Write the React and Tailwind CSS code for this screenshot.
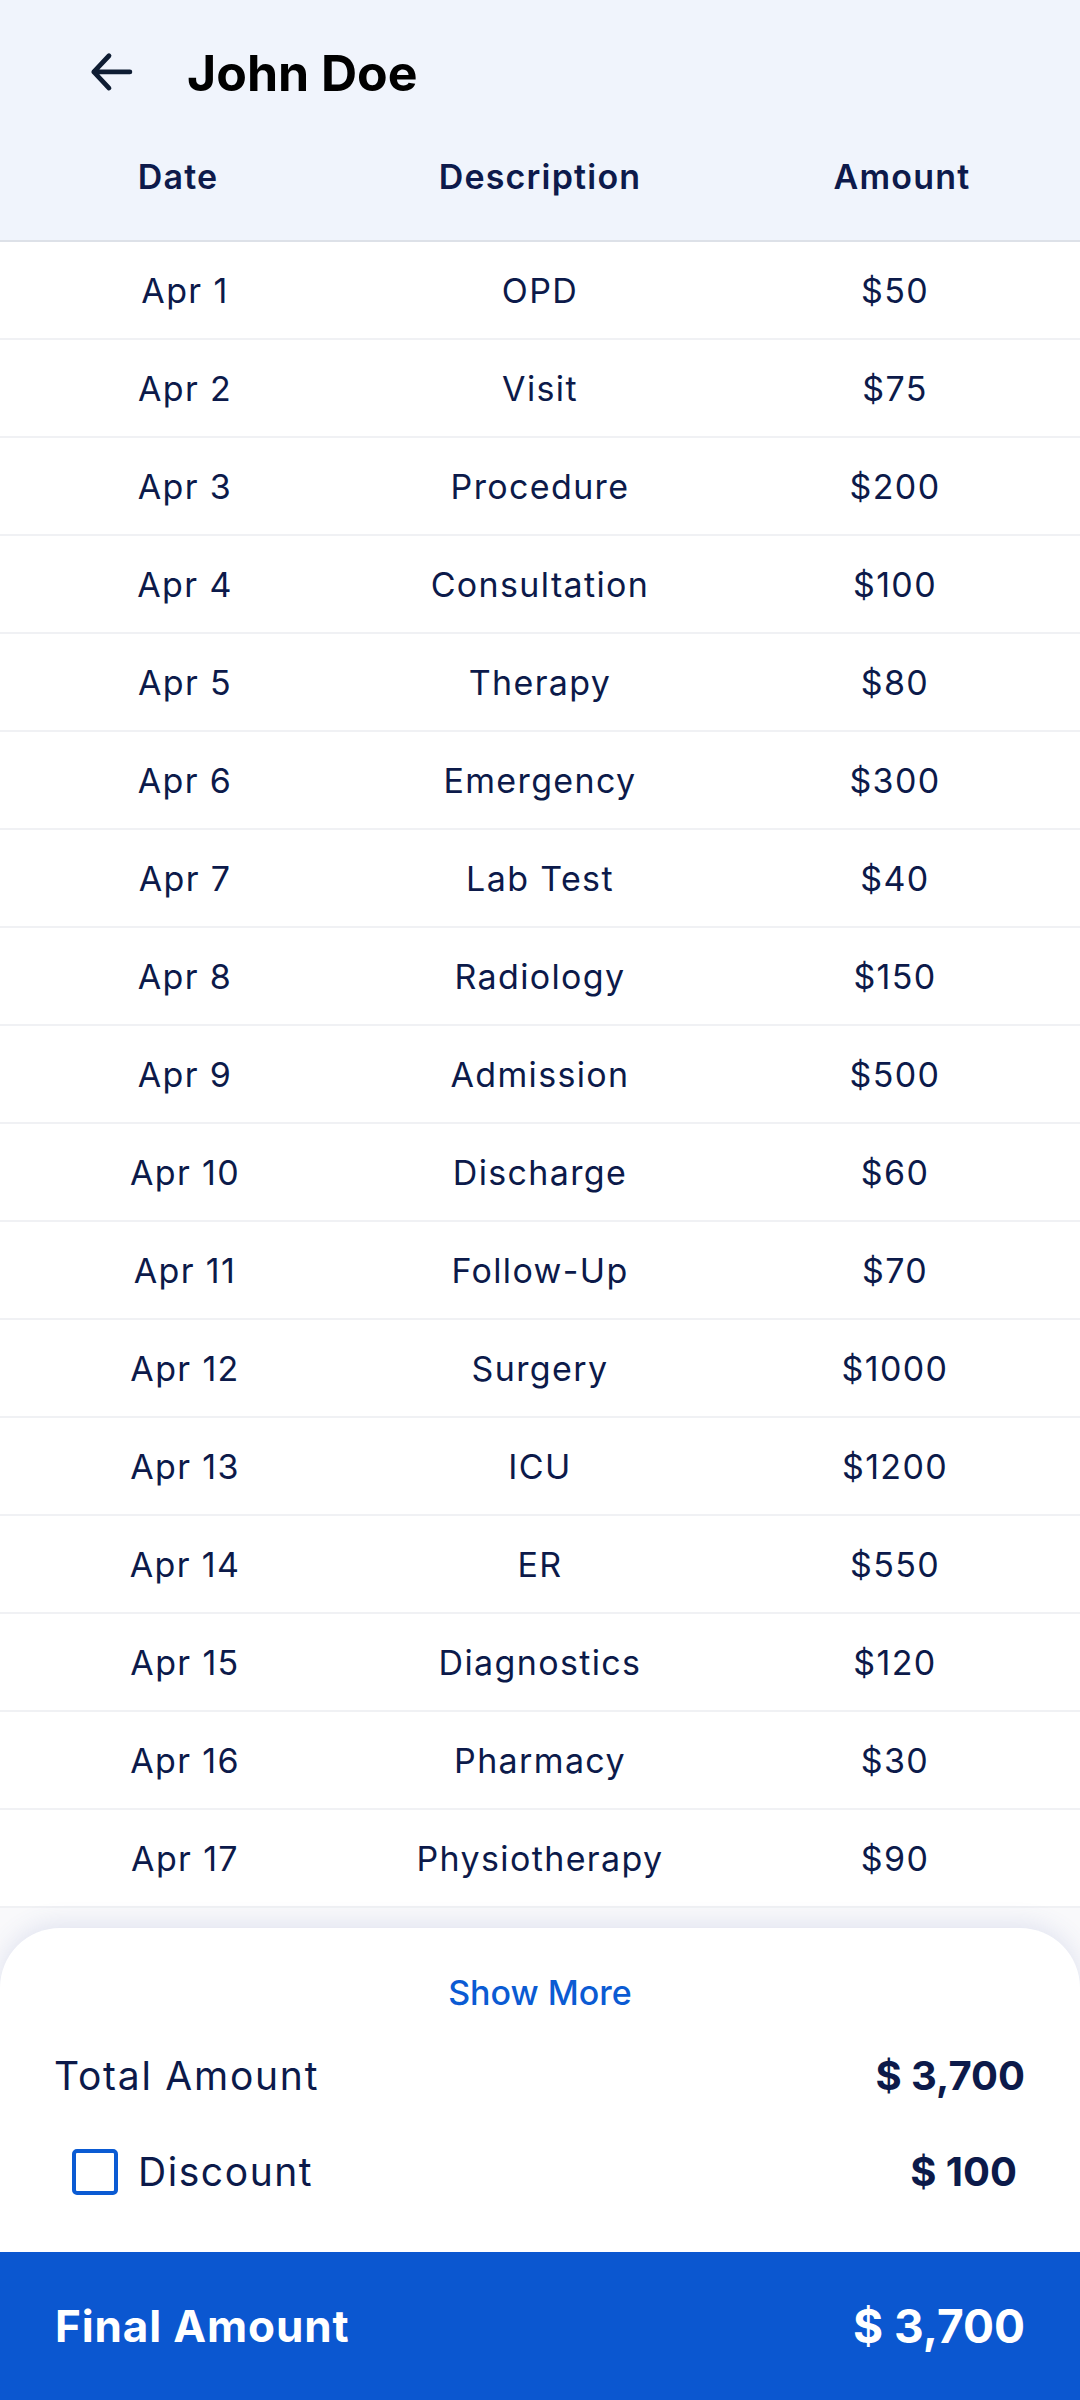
import React, { useState } from 'react';

const rows = [
  ['Apr 1', 'OPD', '$50'],
  ['Apr 2', 'Visit', '$75'],
  ['Apr 3', 'Procedure', '$200'],
  ['Apr 4', 'Consultation', '$100'],
  ['Apr 5', 'Therapy', '$80'],
  ['Apr 6', 'Emergency', '$300'],
  ['Apr 7', 'Lab Test', '$40'],
  ['Apr 8', 'Radiology', '$150'],
  ['Apr 9', 'Admission', '$500'],
  ['Apr 10', 'Discharge', '$60'],
  ['Apr 11', 'Follow-Up', '$70'],
  ['Apr 12', 'Surgery', '$1000'],
  ['Apr 13', 'ICU', '$1200'],
  ['Apr 14', 'ER', '$550'],
  ['Apr 15', 'Diagnostics', '$120'],
  ['Apr 16', 'Pharmacy', '$30'],
  ['Apr 17', 'Physiotherapy', '$90'],
];

function BackArrow() {
  return (
    <svg width="44" height="44" viewBox="0 0 44 44" fill="none">
      <path
        d="M42 22H4M4 22L20 5M4 22L20 39"
        stroke="#0f1d33"
        strokeWidth="5"
        strokeLinecap="round"
        strokeLinejoin="round"
        transform="scale(0.95)"
      />
    </svg>
  );
}

export default function App() {
  const [discount, setDiscount] = useState(false);

  return (
    <div
      className="w-[1080px] h-[2400px] flex flex-col bg-white overflow-hidden"
      style={{ fontFamily: 'Inter, "Noto Sans", sans-serif' }}
    >
      {/* Header */}
      <div className="h-[242px] bg-[#f0f4fc] border-b-2 border-[#dde1e8] flex flex-col shrink-0">
        <div className="h-[66px] mt-[40px] flex items-center">
          <div className="ml-[90px] w-[44px] flex items-center justify-center">
            <BackArrow />
          </div>
          <h1 className="ml-[53px] text-[50px] font-bold text-black leading-none">John Doe</h1>
        </div>
        <div className="mt-[44px] h-[52px] grid grid-cols-[356px_368px_356px] items-center text-[34px] font-semibold text-[#0d1a4b] tracking-[0.035em]">
          <div className="text-center">Date</div>
          <div className="text-center">Description</div>
          <div className="text-center">Amount</div>
        </div>
      </div>

      {/* Rows */}
      <div className="flex flex-col shrink-0">
        {rows.map(([date, desc, amount]) => (
          <div
            key={date}
            className="h-[98px] grid grid-cols-[370px_340px_370px] items-center border-b-2 border-[#f0f1f4] text-[34px] text-[#0c1a4a] tracking-[0.04em]"
          >
            <div className="text-center">{date}</div>
            <div className="text-center">{desc}</div>
            <div className="text-center">{amount}</div>
          </div>
        ))}
      </div>

      {/* Bottom area */}
      <div className="flex-1 flex flex-col bg-[#f9f9fb] pt-[20px]">
        <div className="flex-1 bg-white rounded-t-[60px] shadow-[0_-4px_24px_rgba(70,90,170,0.14)] flex flex-col">
          <div className="h-[128px] flex items-center justify-center">
            <button className="text-[34px] font-medium text-[#0b5bd3]">Show More</button>
          </div>
          <div className="flex items-center justify-between pl-[54px] pr-[55px] h-[40px]">
            <span className="text-[39px] text-[#0c1a4a] tracking-[0.045em]">Total Amount</span>
            <span className="text-[40px] font-bold text-[#0c1a4a]">$ 3,700</span>
          </div>
          <div className="flex items-center justify-between pl-[72px] pr-[63px] mt-[53px] h-[46px]">
            <label className="flex items-center gap-[20px]">
              <button
                onClick={() => setDiscount(!discount)}
                className="w-[46px] h-[46px] rounded-[5px] border-[4px] border-[#0b5bd3] bg-white"
              />
              <span className="text-[39px] text-[#0c1a4a] tracking-[0.04em]">Discount</span>
            </label>
            <span className="text-[40px] font-bold text-[#0c1a4a]">$ 100</span>
          </div>
        </div>
        <div className="h-[148px] bg-[#0b57d0] flex items-center justify-between pl-[55px] pr-[55px] shrink-0">
          <span className="text-[44px] font-bold text-white tracking-[0.02em]">Final Amount</span>
          <span className="text-[46px] font-bold text-white">$ 3,700</span>
        </div>
      </div>
    </div>
  );
}
